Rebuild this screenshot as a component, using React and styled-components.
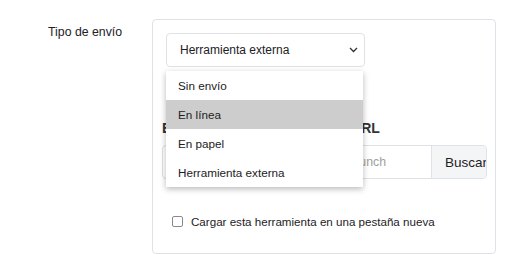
import React from "react";
import styled, { createGlobalStyle } from "styled-components";

const GlobalStyle = createGlobalStyle`
  body {
    margin: 0;
    background: #ffffff;
    font-family: "Liberation Sans", Arial, sans-serif;
    color: #1d2125;
  }
`;

const Page = styled.div`
  display: flex;
  align-items: flex-start;
  padding: 19px 0 0 0;
  width: 521px;
  height: 269px;
  box-sizing: border-box;
`;

const FieldLabel = styled.div`
  width: 152px;
  box-sizing: border-box;
  padding: 6px 0 0 48px;
  font-size: 12.3px;
`;

const Panel = styled.div`
  position: relative;
  width: 344px;
  height: 235px;
  box-sizing: border-box;
  border: 1px solid #dee2e6;
  border-radius: 4px;
  padding: 13px 0 0 9px;
  display: flex;
  flex-direction: column;
`;

const SelectBox = styled.div`
  margin-left: 4px;
  width: 199px;
  height: 34px;
  box-sizing: border-box;
  border: 1px solid #dee2e6;
  border-radius: 4px;
  display: flex;
  align-items: center;
  justify-content: space-between;
  padding: 0 6px 0 13px;
  font-size: 12px;
`;

const Menu = styled.div`
  position: absolute;
  top: 51px;
  left: 13px;
  width: 197px;
  background: #fff;
  box-shadow: 0 2px 6px rgba(0, 0, 0, 0.28);
  z-index: 2;
`;

const Option = styled.div`
  height: 29px;
  display: flex;
  align-items: center;
  padding-left: 12px;
  font-size: 11.7px;
  background: ${(p) => (p.$active ? "#cdcdcd" : "#fff")};
`;

const Heading = styled.div`
  margin-top: 53px;
  font-size: 14px;
  font-weight: bold;
  color: #333;
  height: 21px;
  white-space: nowrap;
`;

const InputGroup = styled.div`
  margin-top: 4px;
  width: 325px;
  height: 34px;
  display: flex;
  border: 1px solid #dee2e6;
  border-radius: 4px;
  box-sizing: border-box;
  overflow: hidden;
`;

const TextInput = styled.div`
  flex: 1;
  display: flex;
  align-items: center;
  justify-content: flex-end;
  padding-right: 45px;
  color: #a0a0a0;
  font-size: 12.3px;
  white-space: nowrap;
  overflow: hidden;
`;

const Button = styled.div`
  width: 55px;
  display: flex;
  align-items: center;
  padding-left: 13px;
  box-sizing: border-box;
  background: #f4f5f6;
  border-left: 1px solid #dee2e6;
  font-size: 13.5px;
  white-space: nowrap;
  overflow: hidden;
`;

const CheckRow = styled.label`
  margin-top: 36px;
  margin-left: 10px;
  display: flex;
  align-items: center;
  gap: 8px;
  font-size: 11.6px;
`;

const Box = styled.span`
  width: 11px;
  height: 11px;
  box-sizing: border-box;
  border: 1px solid #8a8a8a;
  border-radius: 2px;
  background: #fff;
`;

const Chevron = () => (
  <svg width="9" height="6" viewBox="0 0 9 6">
    <path d="M1 1l3.5 3.5L8 1" fill="none" stroke="#333" strokeWidth="1.3" />
  </svg>
);

export default function App() {
  const options = ["Sin envío", "En línea", "En papel", "Herramienta externa"];
  return (
    <>
      <GlobalStyle />
      <Page>
        <FieldLabel>Tipo de envío</FieldLabel>
        <Panel>
          <SelectBox>
            <span>Herramienta externa</span>
            <Chevron />
          </SelectBox>
          <Menu>
            {options.map((o) => (
              <Option key={o} $active={o === "En línea"}>
                {o}
              </Option>
            ))}
          </Menu>
          <Heading>Enlace de la herramienta de URL</Heading>
          <InputGroup>
            <TextInput>URL de la herramienta launch</TextInput>
            <Button>Buscar</Button>
          </InputGroup>
          <CheckRow>
            <Box />
            Cargar esta herramienta en una pestaña nueva
          </CheckRow>
        </Panel>
      </Page>
    </>
  );
}
